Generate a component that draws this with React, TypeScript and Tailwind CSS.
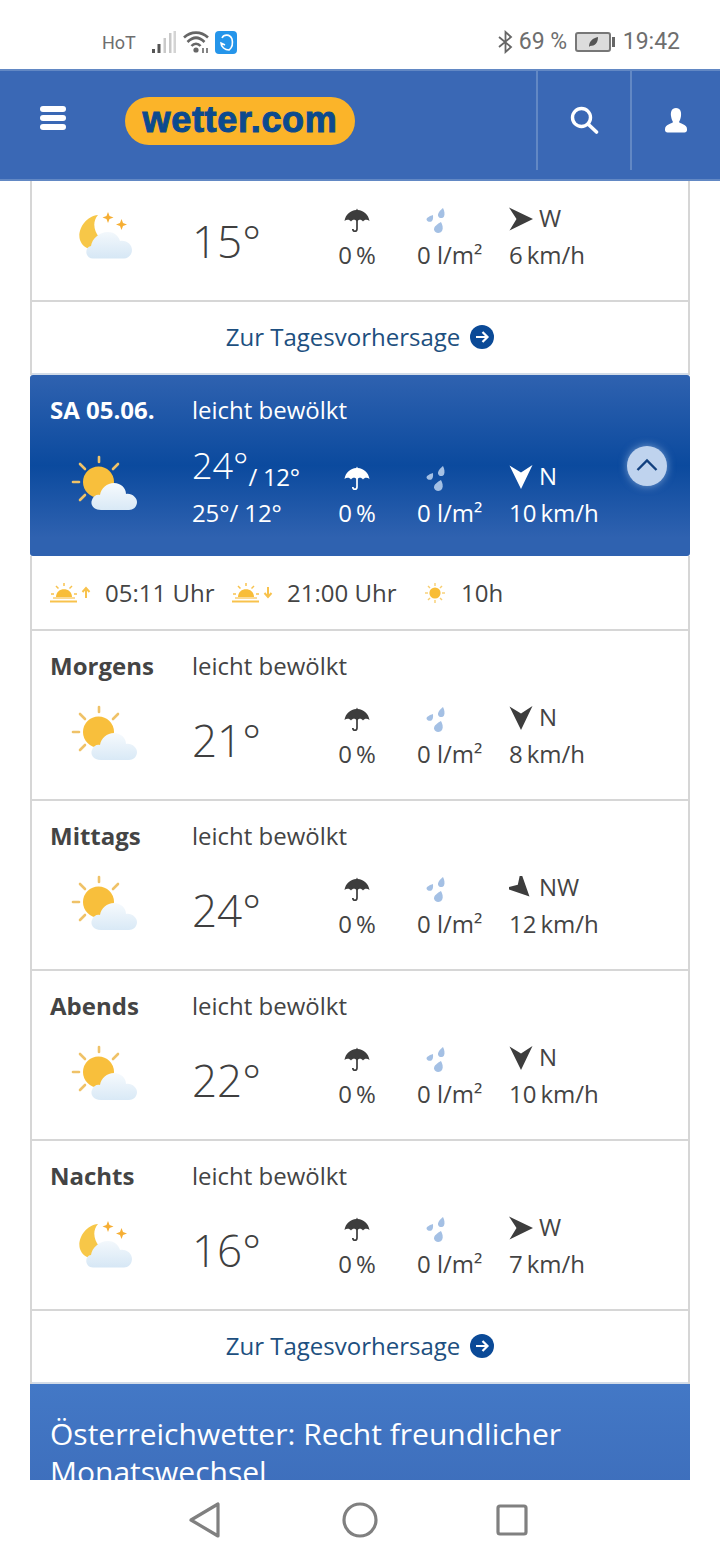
import React from "react";

const Umbrella = ({ color = "#3d3d3d" }: { color?: string }) => (
  <svg width="26" height="25" viewBox="0 0 26 25" className="block">
    <path d="M13 0.5 L13.8 2 C19.5 2.3 24.5 6.5 25.5 13 C23.5 11.2 20.5 11.2 19 13.4 C17.5 11.2 14.6 11.2 13 13.4 C11.4 11.2 8.5 11.2 7 13.4 C5.5 11.2 2.5 11.2 0.5 13 C1.5 6.5 6.5 2.3 12.2 2 Z" fill={color} />
    <path d="M13 11 V21 C13 24 8.8 24 8.8 21" fill="none" stroke={color} strokeWidth="1.7" />
  </svg>
);

const Drops = () => (
  <svg width="20" height="26" viewBox="0 0 20 26" className="block">
    <path d="M17 0 C18.5 3 19 6 18 8.5 C16.5 11 12.5 10.5 12 7.5 C11.7 5 14.5 2 17 0 Z" fill="#a4c0e4" />
    <path d="M7 7 C7 9 7.5 11 6 13 C4.5 14.5 1 14 0.5 11.5 C0.5 9.5 4 8 7 7 Z" fill="#a4c0e4" />
    <path d="M15 14 C16.5 17 17.5 20 16 23 C14 26 8.5 25.5 8 21.5 C7.8 18.5 11.5 16 15 14 Z" fill="#a4c0e4" />
  </svg>
);

const WindArrow = ({ rot, color = "#3d3d3d" }: { rot: number; color?: string }) => (
  <svg width="24" height="24" viewBox="0 0 24 24" className="block">
    <path d="M0 0.5 L24 12 L0.5 23.5 L7.5 12 Z" fill={color} transform={`rotate(${rot} 12 12)`} />
  </svg>
);

const SunCloud = ({ id }: { id: string }) => (
  <svg width="68" height="60" viewBox="0 0 68 60" className="block">
    <defs>
      <linearGradient id={id} x1="0" y1="0" x2="0" y2="1">
        <stop offset="0" stopColor="#f6fafd" />
        <stop offset="1" stopColor="#d9e9f6" />
      </linearGradient>
    </defs>
    <g stroke="#efc268" strokeWidth="2.6" strokeLinecap="round">
      <line x1="28" y1="2" x2="28" y2="7" />
      <line x1="9" y1="9" x2="14" y2="14" />
      <line x1="47" y1="9" x2="42" y2="14" />
      <line x1="2" y1="27" x2="8" y2="27" />
      <line x1="9" y1="45" x2="14" y2="40" />
    </g>
    <circle cx="27.5" cy="27" r="15.5" fill="#f8bf3c" />
    <path d="M30 55 C22 55 19 49 21 45 C22 41 26 39 29 40 C30 33 36 28 43 28 C50 28 55 33 55 39 C61 38 66 43 66 47 C66 52 62 55 58 55 Z" fill={`url(#${id})`} />
  </svg>
);

const MoonCloud = ({ id }: { id: string }) => (
  <svg width="54" height="50" viewBox="0 0 54 50" className="block">
    <defs>
      <linearGradient id={id} x1="0" y1="0" x2="0" y2="1">
        <stop offset="0" stopColor="#f3f8fc" />
        <stop offset="1" stopColor="#d6e7f5" />
      </linearGradient>
    </defs>
    <path d="M19 4 C6 5 -2 20 1 29 C3 35 8 38 13 38 L20 26 C15 20 13 11 19 4 Z" fill="#f7c748" />
    <path d="M29 1 L30.5 5 L34.5 6.5 L30.5 8 L29 12 L27.5 8 L23.5 6.5 L27.5 5 Z" fill="#f6ae33" />
    <path d="M42.5 8 L44 12 L48 13.5 L44 15 L42.5 19 L41 15 L37 13.5 L41 12 Z" fill="#f6ae33" />
    <path d="M14 47.5 C6 47.5 5 36 12 35 C13 28 20 21 29 21 C36 21 40 26 41 30 C48 29 53 34 53 39 C53 44 49 47.5 45 47.5 Z" fill={`url(#${id})`} />
  </svg>
);

const SunHorizon = ({ dir }: { dir: "up" | "down" }) => (
  <svg width="41" height="20" viewBox="0 0 41 20" className="block">
    <g stroke="#f8c24c" strokeWidth="1.5">
      <line x1="14" y1="0" x2="14" y2="3" />
      <line x1="6" y1="3" x2="8.5" y2="5.5" />
      <line x1="22" y1="3" x2="19.5" y2="5.5" />
      <line x1="1" y1="11" x2="4" y2="11" />
      <line x1="24" y1="11" x2="27" y2="11" />
      <line x1="0" y1="18.5" x2="27" y2="18.5" strokeWidth="2" />
      <line x1="3" y1="15" x2="25" y2="15" strokeWidth="1.2" />
    </g>
    <path d="M6 14 C6 3.5 22 3.5 22 14 Z" fill="#f8bd38" />
    {dir === "up" ? (
      <path d="M36 15 V6 M32.5 9 L36 5 L39.5 9" fill="none" stroke="#f8c24c" strokeWidth="2" />
    ) : (
      <path d="M36 4 V13 M32.5 10 L36 14 L39.5 10" fill="none" stroke="#f8c24c" strokeWidth="2" />
    )}
  </svg>
);

const SmallSun = () => (
  <svg width="22" height="20" viewBox="0 0 22 20" className="block">
    <g stroke="#f8ce70" strokeWidth="1.4">
      <line x1="11" y1="0" x2="11" y2="3" />
      <line x1="11" y1="17" x2="11" y2="20" />
      <line x1="1" y1="10" x2="4" y2="10" />
      <line x1="18" y1="10" x2="21" y2="10" />
      <line x1="4" y1="3" x2="6" y2="5" />
      <line x1="18" y1="3" x2="16" y2="5" />
      <line x1="4" y1="17" x2="6" y2="15" />
      <line x1="18" y1="17" x2="16" y2="15" />
    </g>
    <circle cx="11" cy="10" r="5.6" fill="#f8bd38" />
  </svg>
);

const ArrowCircle = () => (
  <svg width="24" height="24" viewBox="0 0 24 24" className="block">
    <circle cx="12" cy="12" r="12" fill="#0b4a97" />
    <path d="M6 12 H17 M12.5 7 L17.5 12 L12.5 17" fill="none" stroke="#fff" strokeWidth="2.2" />
  </svg>
);

type RowData = { title?: string; temp: string; dir: string; rot: number; speed: string; night?: boolean; id: string };

const Measures = ({ dir, rot, speed, white }: { dir: string; rot: number; speed: string; white?: boolean }) => (
  <>
    <div className="w-[90px] pr-[30px] flex flex-col items-center">
      <div className="h-[36px] pt-[7px]"><Umbrella color={white ? "#ffffff" : "#3d3d3d"} /></div>
      <div className="h-[36px] leading-[36px] whitespace-nowrap">0&#8198;%</div>
    </div>
    <div className="w-[92px] flex flex-col">
      <div className="h-[36px] pt-[7px] pl-[9px]"><Drops /></div>
      <div className="h-[36px] leading-[36px] whitespace-nowrap">0 l/m²</div>
    </div>
    <div className="flex flex-col">
      <div className="h-[36px] flex items-center gap-[6px]">
        <WindArrow rot={rot} color={white ? "#ffffff" : "#3d3d3d"} />
        <span className="leading-[36px] -mt-[2px]">{dir}</span>
      </div>
      <div className="h-[36px] leading-[36px] whitespace-nowrap">{speed}</div>
    </div>
  </>
);

const Row = ({ title, temp, dir, rot, speed, night, id }: RowData) => (
  <section className={`border-b-2 border-[#d6d6d6] px-[18px] ${title ? "h-[170px] pt-[20px]" : "h-[121px] pt-[20px]"}`}>
    {title && (
      <div className="flex h-[30px] leading-[30px] mb-[19px]">
        <div className="w-[142px] font-bold">{title}</div>
        <div>leicht bewölkt</div>
      </div>
    )}
    <div className="flex">
      <div className={`w-[142px] ${night ? "pl-[29px] pt-[10px]" : "pl-[21px] pt-[5px]"}`}>
        {night ? <MoonCloud id={id} /> : <SunCloud id={id} />}
      </div>
      <div className="w-[135px] text-[44px] font-[350] leading-[60px] pt-[10px] text-[#3f3f3f]">{temp}</div>
      <Measures dir={dir} rot={rot} speed={speed} />
    </div>
  </section>
);

const LinkRow = () => (
  <a className="h-[73px] border-b-2 border-[#d3dce8] flex items-center justify-center gap-[10px] pb-[2px] text-[#1d4f80]">
    <span>Zur Tagesvorhersage</span>
    <ArrowCircle />
  </a>
);

export default function App() {
  return (
    <div className="w-[720px] h-[1560px] flex flex-col overflow-hidden bg-white text-[24px] text-[#444444] font-['Open_Sans',sans-serif]">
      {/* Status bar */}
      <div className="h-[69px] shrink-0 flex items-center pl-[102px] pr-[40px] pt-[15px] text-[#6e6e6e] font-['Roboto',sans-serif]">
        <span className="text-[18px] w-[50px]">HoT</span>
        <svg width="24" height="23" viewBox="0 0 24 23" className="block">
          <rect x="0" y="18" width="3" height="4" fill="#555" />
          <rect x="5.5" y="13" width="3" height="9" fill="#555" />
          <rect x="11.5" y="7" width="2.5" height="15" fill="#c9c9c9" />
          <rect x="17" y="2" width="2.5" height="20" fill="#c9c9c9" />
          <rect x="21.5" y="0" width="2.5" height="22" fill="#d4d4d4" />
        </svg>
        <svg width="28" height="24" viewBox="0 0 28 24" className="block ml-[7px]">
          <path d="M1 7.5 C8 1 18 1 25 7.5 M4.5 12 C10 6.5 16 6.5 21.5 12 M8.5 16 C11 13 15 13 17.5 16" fill="none" stroke="#666" strokeWidth="2.6" />
          <circle cx="13" cy="20" r="2.6" fill="#666" />
          <path d="M20 18 V23 M24 18 V23" stroke="#666" strokeWidth="1.6" />
        </svg>
        <svg width="22" height="23" viewBox="0 0 22 23" className="block ml-[4px]">
          <rect width="22" height="23" rx="4" fill="#2595ea" />
          <path d="M7 7 C9 3 15 3 17 8 C18 12 18 16 14 19 C10 19 6 16 6 12 L10 14" fill="none" stroke="#fff" strokeWidth="1.6" />
        </svg>
        <div className="ml-auto flex items-center text-[23px]">
          <svg width="17" height="24" viewBox="0 0 17 24" className="block">
            <path d="M2 7 L14 17 L8.5 22 V2 L14 7 L2 17" fill="none" stroke="#666" strokeWidth="1.8" />
          </svg>
          <span className="ml-[5px] w-[56px] whitespace-nowrap">69 %</span>
          <div className="w-[36px] h-[20px] border-2 border-[#777] rounded-[3px] bg-[#dcdcdc] flex items-center justify-center">
            <svg width="12" height="12" viewBox="0 0 12 12" className="block">
              <path d="M2 11 C2 5 6 2 11 1 C11 7 8 10 3 10 Z" fill="#555" />
            </svg>
          </div>
          <div className="w-[3px] h-[10px] bg-[#666] ml-[1px]" />
          <span className="ml-[8px]">19:42</span>
        </div>
      </div>

      {/* Header */}
      <header className="h-[112px] shrink-0 bg-[#3a68b5] border-y-2 border-[#6288c4] flex text-white">
        <div className="w-[125px] pl-[40px] pt-[35px]">
          <div className="w-[26px] flex flex-col gap-[3px]">
            <div className="h-[6px] rounded-[3px] bg-white" />
            <div className="h-[6px] rounded-[3px] bg-white" />
            <div className="h-[6px] rounded-[3px] bg-white" />
          </div>
        </div>
        <div className="w-[411px] pt-[26px]">
          <div className="w-[230px] h-[48px] rounded-[24px] bg-[#fbb429] flex items-center justify-center pb-[2px] text-[#0c4a8e] text-[36px] font-bold tracking-[0.7px] [-webkit-text-stroke:1px_#0c4a8e] font-['Liberation_Sans',sans-serif]">
            wetter.com
          </div>
        </div>
        <div className="w-[94px] h-[100px] border-l-2 border-[#6288c4] flex items-center justify-center -mt-[1px]">
          <svg width="30" height="30" viewBox="0 0 30 30" className="block">
            <circle cx="12.5" cy="12.5" r="9" fill="none" stroke="#fff" strokeWidth="3.4" />
            <path d="M19 19 L27.5 27" stroke="#fff" strokeWidth="3.6" strokeLinecap="round" />
          </svg>
        </div>
        <div className="flex-1 h-[100px] border-l-2 border-[#6288c4] flex items-center justify-center pr-[1px] -mt-[1px]">
          <svg width="24" height="26" viewBox="0 0 24 26" className="block">
            <path d="M12 1 C16.5 1 17.5 5 17 9 C16.6 12 15.6 14 15 15 C15 16.5 23 17 23 22 V23 C23 24.5 22 25.5 20.5 25.5 H3.5 C2 25.5 1 24.5 1 23 V22 C1 17 9 16.5 9 15 C8.4 14 7.4 12 7 9 C6.5 5 7.5 1 12 1 Z" fill="#fff" />
          </svg>
        </div>
      </header>

      {/* Content */}
      <main className="flex-1 min-h-0 overflow-hidden px-[30px]">
        <div className="border-x-2 border-[#d6d6d6]">
          <Row temp="15°" dir="W" rot={0} speed={"6\u2006km/h"} night id="c0" />
          <LinkRow />
        </div>

        <section className="h-[181px] rounded-[3px] px-[20px] pt-[20px] text-white bg-[linear-gradient(180deg,#2f62b0_0%,#0b4a9e_50%,#2f62b0_90%)]">
          <div className="flex h-[30px] leading-[30px] mb-[34px]">
            <div className="w-[142px] font-bold">SA 05.06.</div>
            <div>leicht bewölkt</div>
          </div>
          <div className="flex">
            <div className="w-[142px] pl-[21px] -mt-[4px]"><SunCloud id="c1" /></div>
            <div className="w-[135px]">
              <div className="h-[36px] whitespace-nowrap flex items-start">
                <span className="text-[36px] font-[350] leading-[36px] -mt-[11px]">24°</span>
                <span className="text-[24px] leading-[36px] tracking-[-0.3px]">/ 12°</span>
              </div>
              <div className="h-[36px] leading-[36px] whitespace-nowrap tracking-[-0.1px]">25°/ 12°</div>
            </div>
            <Measures dir="N" rot={90} speed={"10\u2006km/h"} white />
            <div className="ml-auto mr-[3px] -mt-[13px] w-[40px] h-[40px] rounded-full bg-[#bfd3ee] shadow-[0_0_8px_rgba(191,211,238,0.6)] flex items-center justify-center">
              <svg width="22" height="14" viewBox="0 0 22 14" className="block -mt-[2px]">
                <path d="M1.5 12 L11 2.5 L20.5 12" fill="none" stroke="#12407f" strokeWidth="2.4" />
              </svg>
            </div>
          </div>
        </section>

        <div className="border-x-2 border-[#d6d6d6]">
          <div className="h-[75px] border-b-2 border-[#d6d6d6] pl-[18px] flex items-center">
            <SunHorizon dir="up" />
            <span className="ml-[14px] w-[127px]">05:11 Uhr</span>
            <SunHorizon dir="down" />
            <span className="ml-[14px] w-[137px]">21:00 Uhr</span>
            <SmallSun />
            <span className="ml-[15px]">10h</span>
          </div>
          <Row title="Morgens" temp="21°" dir="N" rot={90} speed={"8\u2006km/h"} id="c2" />
          <Row title="Mittags" temp="24°" dir="NW" rot={45} speed={"12\u2006km/h"} id="c3" />
          <Row title="Abends" temp="22°" dir="N" rot={90} speed={"10\u2006km/h"} id="c4" />
          <Row title="Nachts" temp="16°" dir="W" rot={0} speed={"7\u2006km/h"} night id="c5" />
          <LinkRow />
        </div>

        <section className="h-[180px] px-[20px] pt-[31px] text-white text-[30px] leading-[38px] bg-[linear-gradient(180deg,#4378c6_0%,#3a68b5_100%)]">
          Österreichwetter: Recht freundlicher Monatswechsel
        </section>
      </main>

      {/* Android nav */}
      <nav className="h-[80px] shrink-0 flex items-center justify-center pr-[3px]">
        <svg width="32" height="36" viewBox="0 0 32 36" className="block mr-[121px]">
          <path d="M29 2 V34 L2 18 Z" fill="none" stroke="#808080" strokeWidth="3.2" strokeLinejoin="round" />
        </svg>
        <svg width="36" height="36" viewBox="0 0 36 36" className="block mr-[118px]">
          <circle cx="18" cy="18" r="16" fill="none" stroke="#808080" strokeWidth="3.2" />
        </svg>
        <svg width="32" height="32" viewBox="0 0 32 32" className="block">
          <rect x="2" y="2" width="28" height="28" rx="2" fill="none" stroke="#808080" strokeWidth="3.2" />
        </svg>
      </nav>
    </div>
  );
}
